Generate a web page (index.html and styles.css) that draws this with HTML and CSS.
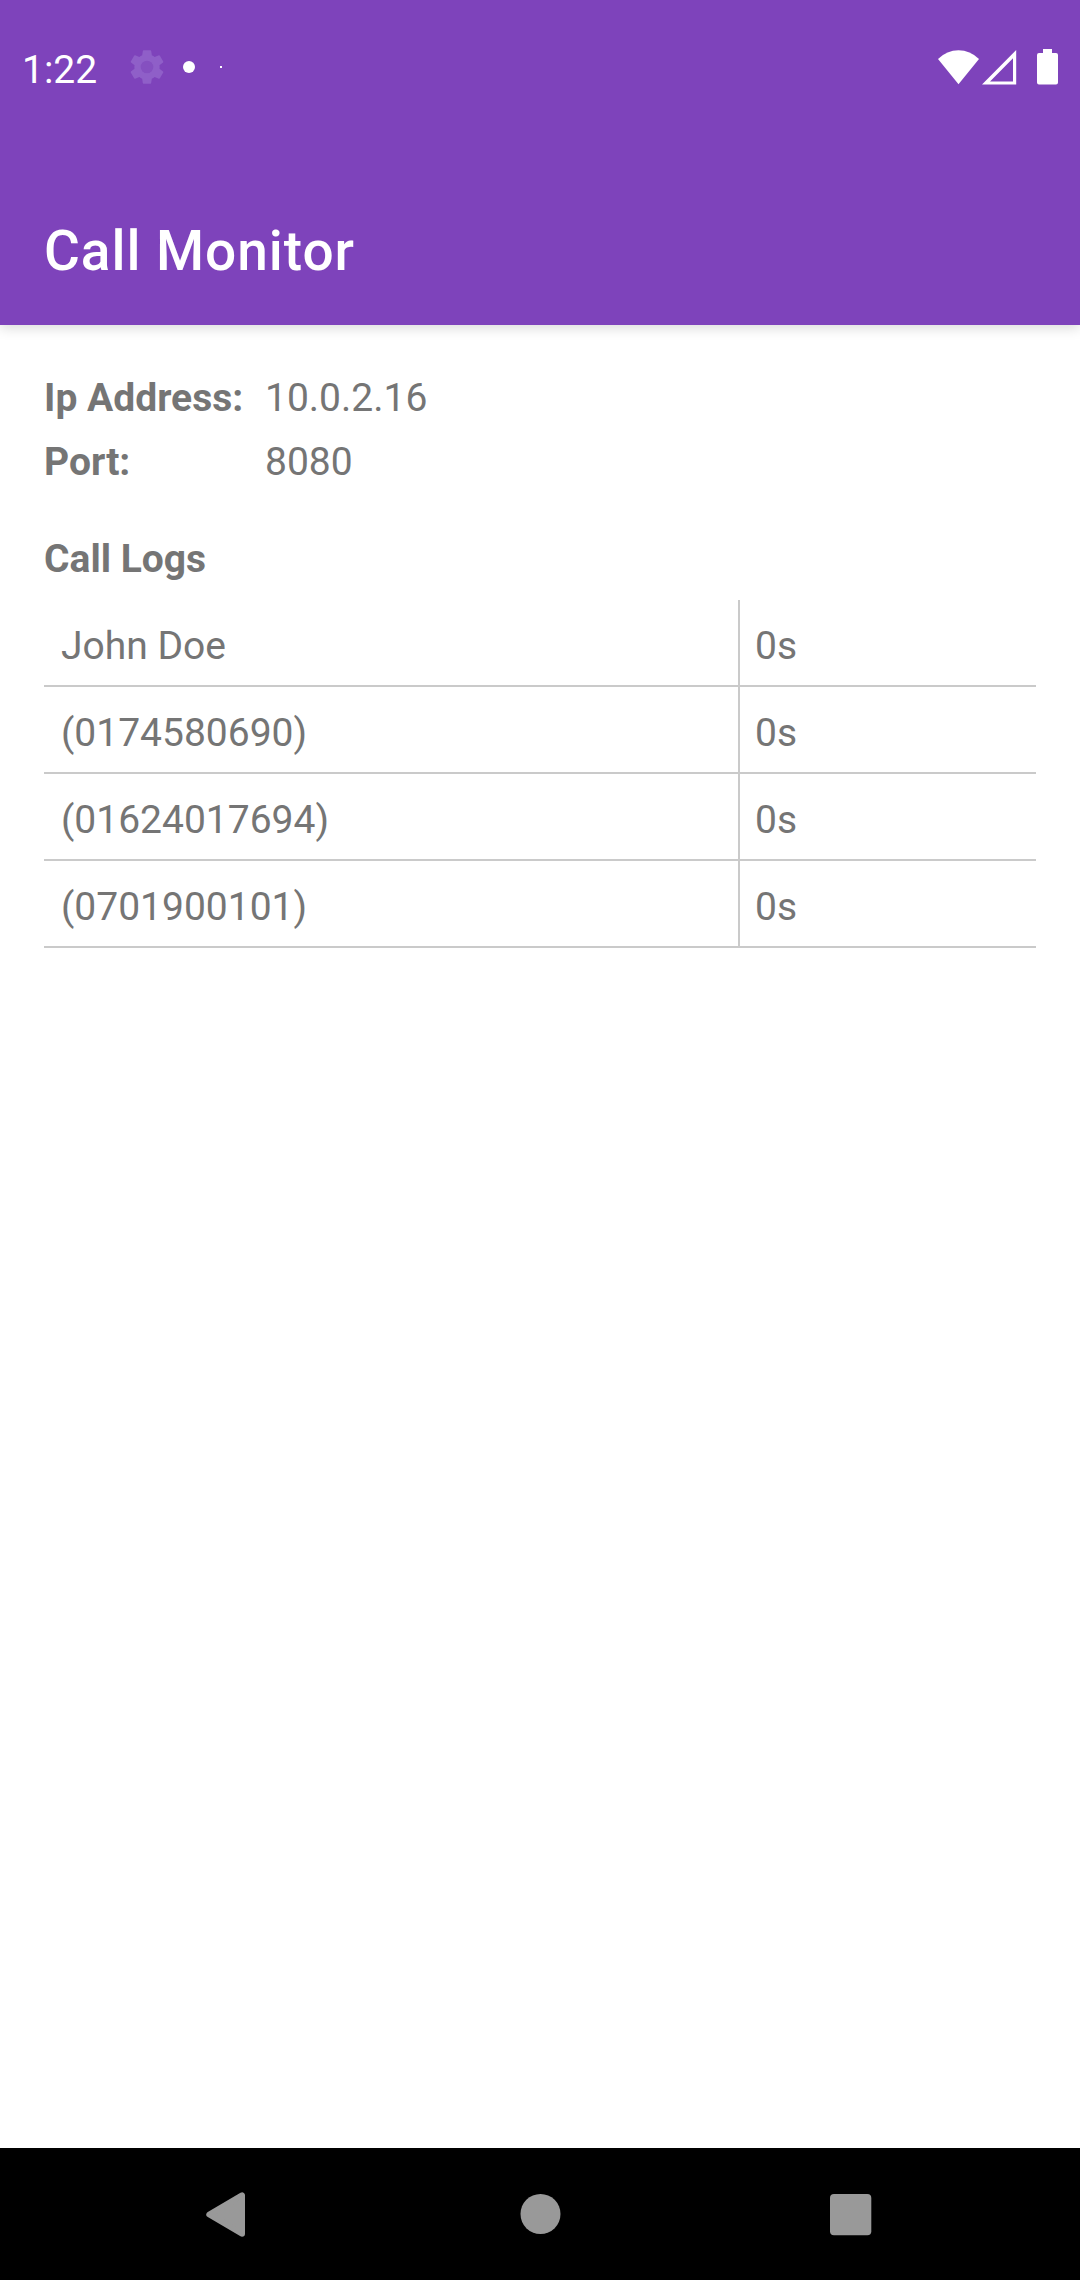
FILE: index.html
```html
<!DOCTYPE html>
<html lang="en">
<head>
<meta charset="utf-8">
<title>Call Monitor</title>
<link rel="stylesheet" href="styles.css">
</head>
<body>
<div class="screen">
  <header class="app-header">
    <div class="status-bar">
      <span class="clock">1:22</span>
      <svg class="gear" width="42" height="42" viewBox="0 0 24 24"><path d="M19.14 12.94c.04-.3.06-.61.06-.94 0-.32-.02-.64-.07-.94l2.03-1.58a.49.49 0 0 0 .12-.61l-1.92-3.32a.49.49 0 0 0-.59-.22l-2.39.96a7.03 7.03 0 0 0-1.62-.94l-.36-2.54a.48.48 0 0 0-.48-.41h-3.84a.47.47 0 0 0-.47.41l-.36 2.54c-.59.24-1.13.57-1.62.94l-2.39-.96a.48.48 0 0 0-.59.22L2.74 8.87a.47.47 0 0 0 .12.61l2.03 1.58c-.05.3-.09.63-.09.94s.02.64.07.94l-2.03 1.58a.49.49 0 0 0-.12.61l1.92 3.32c.12.22.37.29.59.22l2.39-.96c.5.38 1.03.7 1.62.94l.36 2.54c.05.24.24.41.48.41h3.84c.24 0 .44-.17.47-.41l.36-2.54c.59-.24 1.13-.56 1.62-.94l2.39.96c.22.08.47 0 .59-.22l1.92-3.32a.47.47 0 0 0-.12-.61z" fill="#8f5fc8"/><circle cx="12" cy="12" r="3.6" fill="#8550c0"/></svg>
      <span class="dot"></span>
      <span class="dot dot-tiny"></span>
      <span class="spacer"></span>
      <svg class="wifi" width="41" height="36" viewBox="0 0 41 36"><path d="M0 10Q9 1.3 20.5 1.3T41 10L20.5 35.2z" fill="#fff"/></svg>
      <svg class="signal" width="35" height="36" viewBox="0 0 35 36"><path d="M34.2 1V35.5H0zM31 9.3L8 32.4H31z" fill="#fff" fill-rule="evenodd"/></svg>
      <svg class="battery" width="21" height="36" viewBox="0 0 21 36"><path d="M6 0h9v4h4a2 2 0 0 1 2 2v27.600a2 2 0 0 1-2 2H2a2 2 0 0 1-2-2V6a2 2 0 0 1 2-2h4z" fill="#fff"/></svg>
    </div>
    <h1 class="title">Call Monitor</h1>
  </header>
  <main class="content">
    <dl class="server">
      <dt>Ip Address:</dt><dd>10.0.2.16</dd>
      <dt>Port:</dt><dd>8080</dd>
    </dl>
    <h2 class="section">Call Logs</h2>
    <div class="logs">
      <div class="log"><span class="caller">John Doe</span><span class="duration">0s</span></div>
      <div class="log"><span class="caller">(0174580690)</span><span class="duration">0s</span></div>
      <div class="log"><span class="caller">(01624017694)</span><span class="duration">0s</span></div>
      <div class="log"><span class="caller">(0701900101)</span><span class="duration">0s</span></div>
    </div>
  </main>
  <nav class="nav-bar">
    <svg width="46" height="46" viewBox="0 0 46 46"><path d="M39 4.300V42.700L6.300 23.500z" fill="#999" stroke="#999" stroke-width="6" stroke-linejoin="round"/></svg>
    <svg width="46" height="46" viewBox="0 0 46 46"><circle cx="24.500" cy="23" r="20" fill="#999"/></svg>
    <svg width="46" height="46" viewBox="0 0 46 46"><rect x="2" y="3" width="41.300" height="41.300" rx="4" fill="#999"/></svg>
  </nav>
</div>
</body>
</html>
```
FILE: styles.css
```css
* {
  box-sizing: border-box;
  margin: 0;
  padding: 0;
}

body {
  background: #fff;
  color: #757575;
  font-family: Roboto, "Liberation Sans", sans-serif;
  font-size: 39px;
}

.screen {
  display: flex;
  flex-direction: column;
  width: 1080px;
  height: 2280px;
}

.app-header {
  height: 325px;
  background: #7e43bb;
  color: #fff;
  box-shadow: 0 3px 12px rgba(0, 0, 0, 0.15);
}

.status-bar {
  display: flex;
  align-items: center;
  height: 134px;
  margin-bottom: 43px;
  padding: 0 22px;
}

.clock {
  width: 103px;
  padding-top: 6px;
  line-height: 46px;
}

.gear {
  margin-left: 1px;
}

.dot {
  width: 12px;
  height: 12px;
  margin-left: 15px;
  border-radius: 50%;
  background: #fff;
}

.dot-tiny {
  width: 2px;
  height: 2px;
  margin-left: 25px;
  border-radius: 0;
}

.spacer {
  flex: 1;
}

.signal {
  margin: 0 20px 0 3px;
}

.title {
  padding-left: 44px;
  font-size: 55px;
  font-weight: 500;
  line-height: 148px;
  letter-spacing: 0.95px;
}

.content {
  flex: 1;
  padding: 41px 44px 0;
}

.server {
  display: grid;
  grid-template-columns: 221px 1fr;
  line-height: 64px;
}

.server dt {
  font-weight: 700;
}

.section {
  margin: 32px 0 8px;
  font-size: 39px;
  font-weight: 700;
  line-height: 66px;
}

.log {
  display: flex;
  border-bottom: 2px solid #cacaca;
  line-height: 78px;
}

.caller {
  width: 696px;
  padding: 7px 0 0 17px;
  border-right: 2px solid #cacaca;
}

.duration {
  padding: 7px 0 0 15px;
}

.nav-bar {
  display: flex;
  justify-content: space-between;
  align-items: center;
  height: 132px;
  padding: 0 206px 0 203px;
  background: #000;
}
```
